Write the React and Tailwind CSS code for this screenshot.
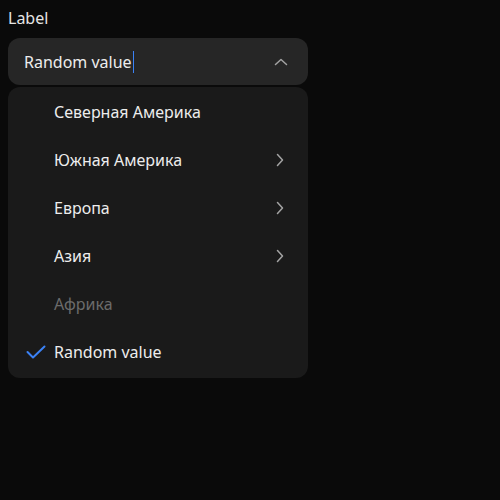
import React from "react";

const Chevron = ({ dir }) =>
  dir === "up" ? (
    <svg width="14" height="8" viewBox="0 0 14 8" fill="none">
      <path d="M1.5 6.5L7 1.5L12.5 6.5" stroke="#a3a3a3" strokeWidth="1.5" strokeLinecap="round" strokeLinejoin="round" />
    </svg>
  ) : (
    <svg width="8" height="14" viewBox="0 0 8 14" fill="none">
      <path d="M1.5 1.5L6.5 7L1.5 12.5" stroke="#a3a3a3" strokeWidth="1.5" strokeLinecap="round" strokeLinejoin="round" />
    </svg>
  );

const items = [
  { t: "Северная Америка" },
  { t: "Южная Америка", sub: true },
  { t: "Европа", sub: true },
  { t: "Азия", sub: true },
  { t: "Африка", disabled: true },
  { t: "Random value", checked: true },
];

export default function App() {
  return (
    <div className="min-h-[500px] w-[500px] bg-[#0a0a0a] text-[#ededed]" style={{ fontFamily: '"Noto Sans", sans-serif' }}>
      <div className="w-[316px] px-2 pt-[7px]">
        <div className="text-[16px] leading-[22px] text-[#e5e5e5]">Label</div>
        <div className="mt-[9px] flex h-[47px] items-center justify-between rounded-[12px] bg-[#262626] pl-4 pr-5">
          <div className="flex items-center text-base">
            <span>Random value</span>
            <span className="ml-[1px] h-[22px] w-[1px] bg-[#3b82f6]" />
          </div>
          <Chevron dir="up" />
        </div>
        <div className="mt-[2px] rounded-[12px] bg-[#1a1a1a] pt-[1px] pb-[2px]">
          {items.map((it) => (
            <div key={it.t} className="flex h-[48px] items-center pr-[24px]">
              <div className="flex w-[46px] justify-end pr-[8px]">
                {it.checked && (
                  <svg width="20" height="14" viewBox="0 0 20 14" fill="none">
                    <path d="M1.5 7L7 12.5L18.5 1.5" stroke="#3b82f6" strokeWidth="2" strokeLinecap="round" strokeLinejoin="round" />
                  </svg>
                )}
              </div>
              <span className={"flex-1 text-base " + (it.disabled ? "text-[#6b6b6b]" : "text-[#ededed]")}>{it.t}</span>
              {it.sub && <Chevron dir="right" />}
            </div>
          ))}
        </div>
      </div>
    </div>
  );
}
